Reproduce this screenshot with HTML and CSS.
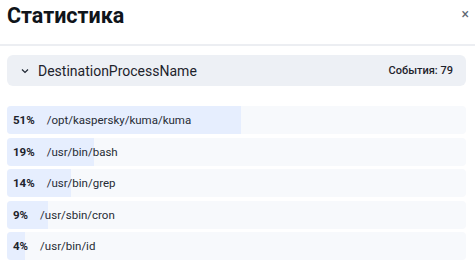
FILE: index.html
```html
<!DOCTYPE html>
<html lang="ru">
<head>
    <meta charset="UTF-8">
    <title>Статистика</title>
    <link rel="stylesheet" href="styles.css">
</head>
<body>
<div class="panel">
    <div class="panel-head">
        <h1 class="title">Статистика</h1>
        <span class="close">&times;</span>
    </div>
    <div class="panel-body">
        <div class="group">
            <span class="chevron">
                <svg width="8" height="6" viewBox="0 0 8 6"><path d="M1 1.5 L4 4.5 L7 1.5" fill="none" stroke="#1f2733" stroke-width="1.2"/></svg>
            </span>
            <span class="group-name">DestinationProcessName</span>
            <span class="group-count">События: 79</span>
        </div>
        <ul class="rows">
            <li class="row"><span class="fill" style="width:51%"></span><b>51%</b><span class="path">/opt/kaspersky/kuma/kuma</span></li>
            <li class="row"><span class="fill" style="width:19%"></span><b>19%</b><span class="path">/usr/bin/bash</span></li>
            <li class="row"><span class="fill" style="width:14%"></span><b>14%</b><span class="path">/usr/bin/grep</span></li>
            <li class="row"><span class="fill" style="width:9%"></span><b>9%</b><span class="path">/usr/sbin/cron</span></li>
            <li class="row"><span class="fill" style="width:4%"></span><b>4%</b><span class="path">/usr/bin/id</span></li>
        </ul>
    </div>
</div>
</body>
</html>
```

FILE: styles.css
```css
*{
    margin: 0;
    padding: 0;
    box-sizing: border-box;
}
li{
    list-style: none;
}
body{
    font-family: Roboto, "Liberation Sans", sans-serif;
    color: #1d232c;
    background: #fff;
}
.panel-head{
    height: 46px;
    display: flex;
    align-items: flex-start;
    justify-content: space-between;
    padding: 2px 6px 0 7px;
    border-bottom: 2px solid #eceef2;
}
.title{
    font-size: 21.5px;
    font-weight: 700;
    line-height: 28px;
    color: #0f141a;
}
.close{
    font-size: 14px;
    color: #5d6772;
    line-height: 24px;
}
.panel-body{
    padding: 9px 9px 0 7px;
}
.group{
    height: 31px;
    background: #edf0f5;
    border-radius: 6px;
    display: flex;
    align-items: center;
    padding: 0 13px 0 14px;
}
.chevron{
    display: flex;
    width: 8px;
    margin-right: 9px;
}
.group-name{
    font-size: 14px;
    flex: 1;
}
.group-count{
    font-size: 11px;
    font-weight: 500;
}
.rows{
    margin-top: 20px;
    display: flex;
    flex-direction: column;
    gap: 3.5px;
}
.row{
    position: relative;
    height: 28px;
    background: #f7f9fc;
    border-radius: 4px;
    display: flex;
    align-items: center;
    padding-left: 6px;
    font-size: 11.5px;
    overflow: hidden;
}
.row .fill{
    position: absolute;
    left: 0;
    top: 0;
    bottom: 0;
    background: #e6eefe;
}
.row b{
    position: relative;
    font-weight: 700;
    margin-right: 12px;
}
.row .path{
    position: relative;
    color: #262c35;
}
```
